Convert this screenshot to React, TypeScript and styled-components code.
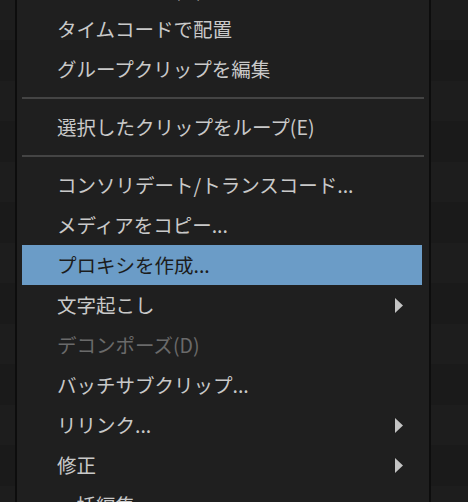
import styled, { createGlobalStyle } from 'styled-components';

const GlobalStyle = createGlobalStyle`
  html, body {
    margin: 0;
    padding: 0;
    width: 468px;
    height: 502px;
    overflow: hidden;
    background: #1b1b1b;
  }
`;

const Backdrop = styled.div`
  width: 468px;
  height: 502px;
  overflow: hidden;
  background: repeating-linear-gradient(
    180deg,
    #1d1d1d 0px,
    #1d1d1d 40px,
    #1a1a1a 40px,
    #1a1a1a 81px
  );
  font-family: 'Noto Sans CJK JP', 'Noto Sans', sans-serif;
`;

const Menu = styled.div`
  margin: -31px 0 0 15px;
  width: 400px;
  padding: 0 7px 0 5px;
  box-sizing: content-box;
  background: #1f1f1f;
  border-left: 2px solid #0d0d0d;
  border-right: 2px solid #0d0d0d;
  display: flex;
  flex-direction: column;
`;

const Item = styled.div<{ $active?: boolean; $disabled?: boolean }>`
  height: 40px;
  display: flex;
  align-items: center;
  justify-content: space-between;
  padding: 0 19px 0 35px;
  font-size: 19.5px;
  line-height: 1;
  white-space: nowrap;
  background: ${(p) => (p.$active ? '#6b9cc7' : 'transparent')};
  color: ${(p) => (p.$active ? '#1c1c1c' : p.$disabled ? '#6a6a6a' : '#c9c9c9')};
`;

const Separator = styled.div`
  height: 18px;
  display: flex;
  align-items: center;

  &::after {
    content: '';
    flex: 1;
    height: 2px;
    background: #444444;
    margin-right: -2px;
  }
`;

const Arrow = () => (
  <svg width="8" height="15" viewBox="0 0 8 15">
    <path d="M0 0 L8 7.5 L0 15 Z" fill="#c4c4c4" />
  </svg>
);

type Entry =
  | { kind: 'sep' }
  | { kind: 'item'; label: string; active?: boolean; disabled?: boolean; sub?: boolean };

const entries: Entry[] = [
  { kind: 'item', label: 'マルチカメラ(M)' },
  { kind: 'item', label: 'タイムコードで配置' },
  { kind: 'item', label: 'グループクリップを編集' },
  { kind: 'sep' },
  { kind: 'item', label: '選択したクリップをループ(E)' },
  { kind: 'sep' },
  { kind: 'item', label: 'コンソリデート/トランスコード...' },
  { kind: 'item', label: 'メディアをコピー...' },
  { kind: 'item', label: 'プロキシを作成...', active: true },
  { kind: 'item', label: '文字起こし', sub: true },
  { kind: 'item', label: 'デコンポーズ(D)', disabled: true },
  { kind: 'item', label: 'バッチサブクリップ...' },
  { kind: 'item', label: 'リリンク...', sub: true },
  { kind: 'item', label: '修正', sub: true },
  { kind: 'item', label: '一括編集' },
];

export default function App() {
  return (
    <>
      <GlobalStyle />
      <Backdrop>
        <Menu>
          {entries.map((e, i) =>
            e.kind === 'sep' ? (
              <Separator key={i} />
            ) : (
              <Item key={i} $active={e.active} $disabled={e.disabled}>
                <span>{e.label}</span>
                {e.sub && <Arrow />}
              </Item>
            )
          )}
        </Menu>
      </Backdrop>
    </>
  );
}
